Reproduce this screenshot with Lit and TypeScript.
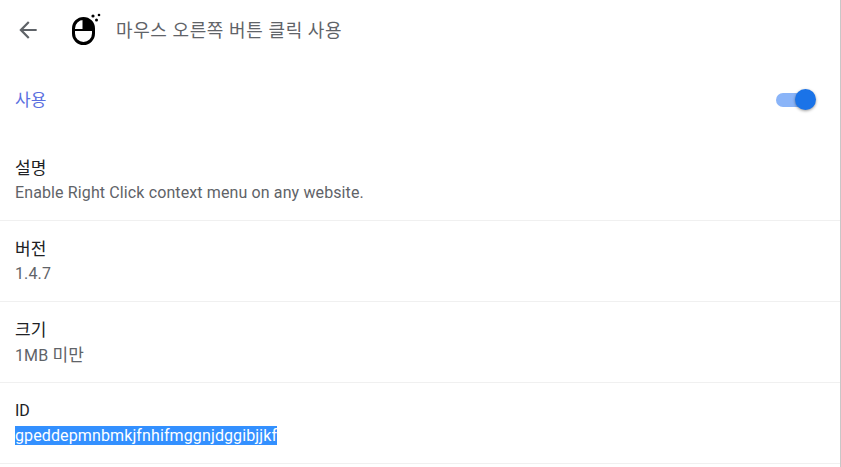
import { LitElement, html, css } from "lit";
import { customElement } from "lit/decorators.js";

const rows = [
  { label: "설명", value: html`Enable Right Click context menu on any website.` },
  { label: "버전", value: html`1.4.7` },
  { label: "크기", value: html`1MB <span class="ko">미만</span>` },
];

@customElement("app-root")
export class AppRoot extends LitElement {
  static styles = css`
    :host {
      display: block;
      height: 467px;
      overflow: hidden;
      background: #fff;
      border-right: 1px solid #c8c8c8;
      box-sizing: border-box;
      font-family: Roboto, "Noto Sans CJK KR", sans-serif;
      font-size: 16px;
    }
    .header {
      display: flex;
      align-items: center;
      height: 60px;
      padding-left: 15px;
    }
    .back {
      width: 26px;
      height: 26px;
      margin-right: 29px;
    }
    .logo {
      width: 34px;
      height: 34px;
      margin-right: 12px;
    }
    .title {
      font-size: 18px;
      letter-spacing: 0.6px;
      color: #5f6368;
      margin-bottom: 2px;
    }
    .toggle-row {
      display: flex;
      align-items: center;
      justify-content: space-between;
      height: 80px;
      padding: 0 30px 0 15px;
      color: #5a6fe0;
      font-size: 17px;
    }
    .toggle-row span {
      margin-bottom: 4px;
    }
    .toggle {
      position: relative;
      width: 34px;
      height: 14px;
      border-radius: 7px;
      background: #8ab4f8;
      margin-bottom: 1px;
    }
    .knob {
      position: absolute;
      right: -6px;
      top: -3.5px;
      width: 21px;
      height: 21px;
      border-radius: 50%;
      background: #1a73e8;
      box-shadow: 0 1px 3px rgba(0, 0, 0, 0.4);
    }
    .row {
      height: 81px;
      border-bottom: 1px solid #f0f0f0;
      padding: 16px 15px 0;
      box-sizing: border-box;
    }
    .label {
      color: #202124;
      font-size: 17px;
      line-height: 24px;
    }
    .label.latin {
      font-size: 16px;
    }
    .value {
      color: #5f6368;
      line-height: 26px;
      letter-spacing: 0.12px;
    }
    .ko {
      font-size: 17px;
    }
    .selected {
      background: #3390ff;
      color: #fff;
      display: inline-block;
      line-height: 19px;
    }
  `;

  render() {
    return html`
      <div class="header">
        <svg class="back" viewBox="0 0 24 24" fill="#5f6368">
          <path d="M20 11H7.83l5.59-5.59L12 4l-8 8 8 8 1.41-1.41L7.83 13H20v-2z" />
        </svg>
        <svg class="logo" viewBox="0 0 34 34">
          <rect x="3.5" y="5.5" width="20" height="25" rx="10" fill="#fff" stroke="#000" stroke-width="3" />
          <path d="M13 5.5h.5a10 10 0 0 1 10 10V17H13z" fill="#000" />
          <path d="M3.5 17h20" stroke="#000" stroke-width="2" />
          <path d="M13.5 5.5V17" stroke="#000" stroke-width="2" />
          <circle cx="23" cy="3" r="1.6" fill="#000" />
          <circle cx="26.5" cy="7" r="1.5" fill="#000" />
          <circle cx="29" cy="2" r="1.3" fill="#000" />
        </svg>
        <span class="title">마우스 오른쪽 버튼 클릭 사용</span>
      </div>
      <div class="toggle-row">
        <span>사용</span>
        <div class="toggle"><div class="knob"></div></div>
      </div>
      ${rows.map(
        (r) => html`<div class="row">
          <div class="label">${r.label}</div>
          <div class="value">${r.value}</div>
        </div>`
      )}
      <div class="row">
        <div class="label latin">ID</div>
        <div class="value"><span class="selected">gpeddepmnbmkjfnhifmggnjdggibjjkf</span></div>
      </div>
    `;
  }
}
